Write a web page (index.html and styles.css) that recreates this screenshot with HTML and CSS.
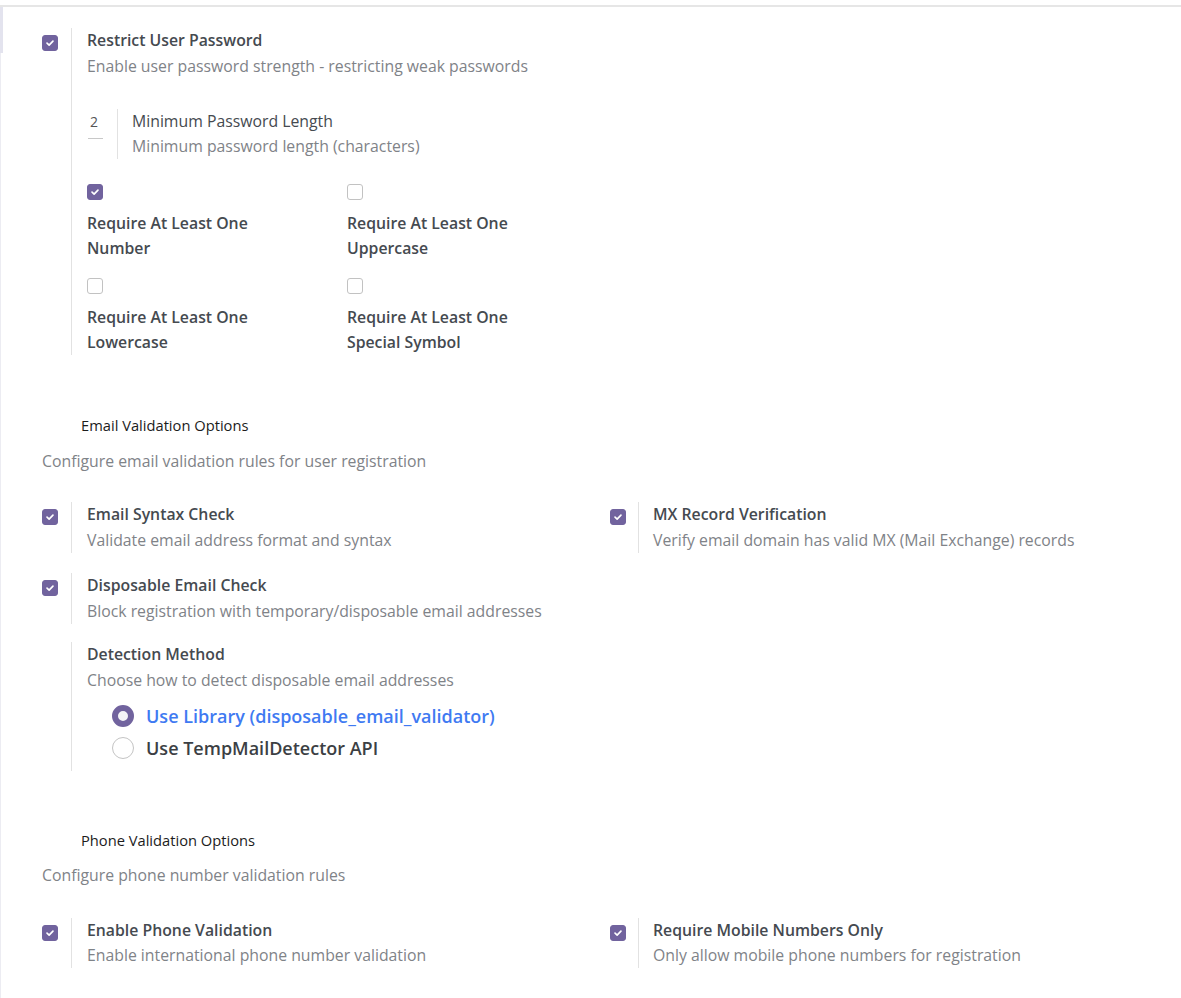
FILE: index.html
```html
<!DOCTYPE html>
<html lang="en">
<head>
<meta charset="utf-8">
<title>Settings</title>
<link rel="stylesheet" href="styles.css">
</head>
<body>
<div class="page">
  <div class="edge"></div>
  <main class="content">

    <div class="setting block-first">
      <div class="setting-box"><span class="cb checked"><svg viewBox="0 0 16 16"><path d="M4.6 8.2 L7 10.4 L11.4 5.8" /></svg></span></div>
      <div class="setting-pane">
        <div class="s-title">Restrict User Password</div>
        <div class="s-desc">Enable user password strength - restricting weak passwords</div>

        <div class="sub-setting">
          <div class="num-input"><span>2</span></div>
          <div class="sub-pane">
            <div class="s-label">Minimum Password Length</div>
            <div class="s-desc">Minimum password length (characters)</div>
          </div>
        </div>

        <div class="req-grid">
          <div class="req">
            <span class="cb checked"><svg viewBox="0 0 16 16"><path d="M4.6 8.2 L7 10.4 L11.4 5.8" /></svg></span>
            <div class="req-label">Require At Least One Number</div>
          </div>
          <div class="req">
            <span class="cb"></span>
            <div class="req-label">Require At Least One Uppercase</div>
          </div>
          <div class="req">
            <span class="cb"></span>
            <div class="req-label">Require At Least One Lowercase</div>
          </div>
          <div class="req">
            <span class="cb"></span>
            <div class="req-label">Require At Least One Special Symbol</div>
          </div>
        </div>
      </div>
    </div>

    <h3 class="sec-title sec-email">Email Validation Options</h3>
    <div class="sec-desc">Configure email validation rules for user registration</div>

    <div class="grid2">
      <div class="setting">
        <div class="setting-box"><span class="cb checked"><svg viewBox="0 0 16 16"><path d="M4.6 8.2 L7 10.4 L11.4 5.8" /></svg></span></div>
        <div class="setting-pane">
          <div class="s-title">Email Syntax Check</div>
          <div class="s-desc">Validate email address format and syntax</div>
        </div>
      </div>
      <div class="setting right">
        <div class="setting-box"><span class="cb checked"><svg viewBox="0 0 16 16"><path d="M4.6 8.2 L7 10.4 L11.4 5.8" /></svg></span></div>
        <div class="setting-pane">
          <div class="s-title">MX Record Verification</div>
          <div class="s-desc">Verify email domain has valid MX (Mail Exchange) records</div>
        </div>
      </div>
      <div class="setting">
        <div class="setting-box"><span class="cb checked"><svg viewBox="0 0 16 16"><path d="M4.6 8.2 L7 10.4 L11.4 5.8" /></svg></span></div>
        <div class="setting-pane">
          <div class="s-title">Disposable Email Check</div>
          <div class="s-desc">Block registration with temporary/disposable email addresses</div>
        </div>
      </div>
      <div></div>
      <div class="setting detection">
        <div class="setting-box"></div>
        <div class="setting-pane">
          <div class="s-title">Detection Method</div>
          <div class="s-desc">Choose how to detect disposable email addresses</div>
          <div class="radios">
            <div class="radio-row"><span class="radio on"></span><span class="radio-label active">Use Library (disposable_email_validator)</span></div>
            <div class="radio-row"><span class="radio"></span><span class="radio-label">Use TempMailDetector API</span></div>
          </div>
        </div>
      </div>
    </div>

    <h3 class="sec-title sec-phone">Phone Validation Options</h3>
    <div class="sec-desc phone-desc">Configure phone number validation rules</div>

    <div class="grid2 phone-grid">
      <div class="setting">
        <div class="setting-box"><span class="cb checked"><svg viewBox="0 0 16 16"><path d="M4.6 8.2 L7 10.4 L11.4 5.8" /></svg></span></div>
        <div class="setting-pane">
          <div class="s-title">Enable Phone Validation</div>
          <div class="s-desc tight">Enable international phone number validation</div>
        </div>
      </div>
      <div class="setting right">
        <div class="setting-box"><span class="cb checked"><svg viewBox="0 0 16 16"><path d="M4.6 8.2 L7 10.4 L11.4 5.8" /></svg></span></div>
        <div class="setting-pane">
          <div class="s-title">Require Mobile Numbers Only</div>
          <div class="s-desc tight">Only allow mobile phone numbers for registration</div>
        </div>
      </div>
    </div>

  </main>
</div>
</body>
</html>
```
FILE: styles.css
```css
* { box-sizing: border-box; }
html, body {
  margin: 0;
  padding: 0;
  background: #ffffff;
}
body {
  font-family: "Open Sans", "Noto Sans", sans-serif;
  font-size: 15.8px;
  line-height: 25px;
  color: #4a4d52;
}
.page {
  display: flex;
  margin-top: 5px;
  border-top: 2px solid #e6e6e6;
  min-height: 993px;
}
.edge {
  width: 3px;
  flex: 0 0 3px;
  border-left: 1px solid #ececf2;
  position: relative;
}
.edge::before {
  content: "";
  position: absolute;
  left: -1px;
  top: 0;
  width: 3px;
  height: 46px;
  background: #e3e3ee;
}
.content {
  flex: 1;
  padding-left: 39px;
  padding-right: 0;
}
.setting {
  display: flex;
  align-items: flex-start;
}
.setting-box {
  width: 29px;
  flex: 0 0 29px;
  padding-top: 7px;
}
.setting.right .setting-box {
  width: 28px;
  flex: 0 0 28px;
}
.setting-pane {
  border-left: 1px solid #e2e2e2;
  padding-left: 15px;
  flex: 1;
}
.setting.right .setting-pane { padding-left: 14px; }
.block-first {
  margin-top: 21px;
}
.cb {
  display: block;
  width: 16px;
  height: 16px;
  border: 1px solid #c2c2c2;
  border-radius: 3px;
  background: #fff;
}
.cb.checked {
  background: #71639e;
  border-color: #71639e;
}
.cb svg {
  display: block;
  width: 14px;
  height: 14px;
}
.cb svg path {
  fill: none;
  stroke: #fff;
  stroke-width: 1.9;
  stroke-linecap: round;
  stroke-linejoin: round;
}
.s-title {
  font-weight: 600;
  color: #454a50;
  font-size: 15.8px;
}
.s-label {
  color: #454a50;
  font-size: 15.8px;
}
.s-desc {
  color: #7f8388;
  font-size: 15.8px;
}
.s-title + .s-desc { margin-top: 1px; }
.s-title + .s-desc.tight { margin-top: 0; }
.sub-setting {
  display: flex;
  margin-top: 30px;
  align-items: stretch;
}
.num-input {
  width: 15px;
  flex: 0 0 15px;
  margin-left: 1px;
  height: 30px;
  border-bottom: 1px solid #c8c8c8;
  overflow: hidden;
  font-size: 14px;
  line-height: 26px;
  color: #555;
  padding-left: 2px;
  margin-right: 14px;
}
.sub-pane {
  border-left: 1px solid #e2e2e2;
  padding-left: 14px;
}
.req-grid {
  display: grid;
  grid-template-columns: 260px 260px;
  row-gap: 17px;
  margin-top: 25px;
}
.req .cb { margin-bottom: 11px; }
.req-label {
  width: 190px;
  font-weight: 600;
  color: #454a50;
  font-size: 15.8px;
}
.sec-title {
  margin: 0;
  font-weight: 400;
  font-size: 14.7px;
  color: #1c1c1c;
  padding-left: 39px;
  line-height: 25px;
}
.sec-email { margin-top: 58px; }
.sec-phone { margin-top: 57px; }
.sec-desc {
  color: #7f8388;
  font-size: 15.8px;
  margin-top: 11px;
  line-height: 25px;
}
.phone-desc { margin-top: 10px; }
.grid2 {
  display: grid;
  grid-template-columns: 568px 568px;
  row-gap: 20px;
  margin-top: 28px;
}
.phone-grid { margin-top: 30px; }
.detection { grid-column: 1 / 2; margin-top: -2px; }
.detection .setting-pane { padding-bottom: 7px; }
.radios {
  padding-left: 25px;
  padding-top: 7px;
}
.radio-row {
  display: flex;
  align-items: center;
  height: 32px;
}
.radio {
  display: block;
  width: 22px;
  height: 22px;
  border-radius: 50%;
  border: 1px solid #c4c4c4;
  background: #fff;
  margin-right: 12px;
  flex: 0 0 22px;
}
.radio.on {
  border: 6px solid #71639e;
  background: #f4f4f7;
}
.radio-label {
  font-size: 18px;
  font-weight: 600;
  color: #3c3f44;
}
.radio-label.active {
  color: #3f7af2;
}
```
